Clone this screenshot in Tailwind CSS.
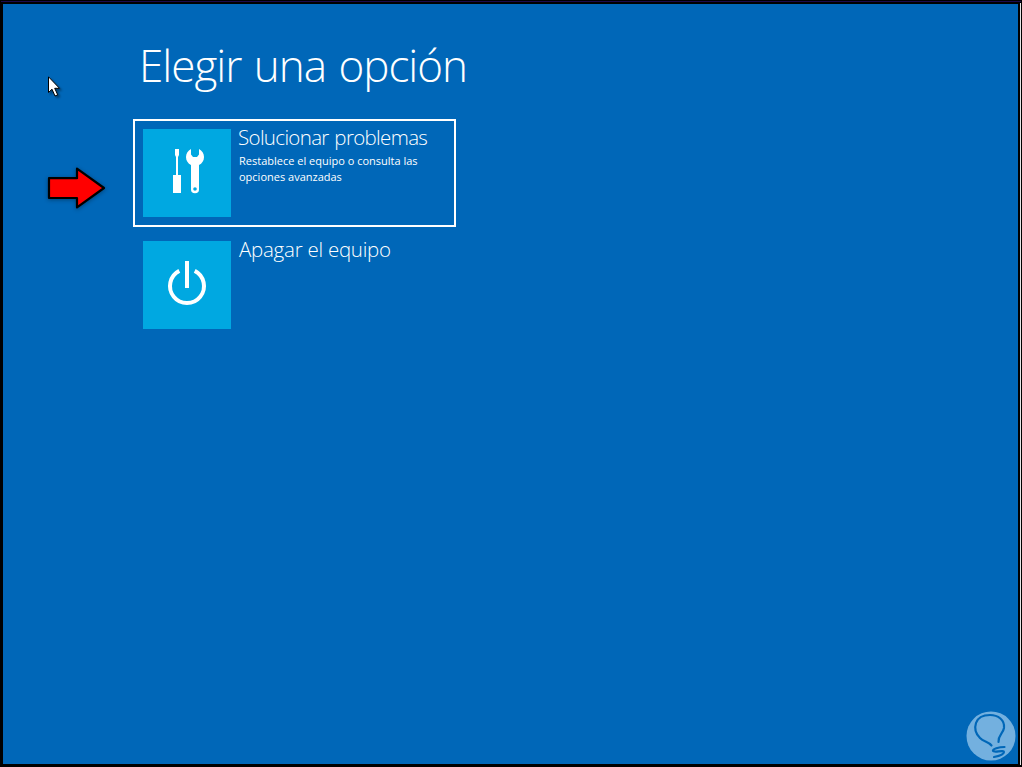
<!DOCTYPE html>
<html lang="es">
<head>
  <meta charset="UTF-8">
  <title>Elegir una opción</title>
  <script src="https://cdn.jsdelivr.net/npm/@tailwindcss/browser@4"></script>
</head>
<body class="relative h-[767px] w-[1022px] overflow-hidden bg-black pl-[3px] pt-[4px] font-['Open_Sans','Noto_Sans',sans-serif] text-white">
  <main class="h-[760px] w-[1015px] bg-[#0067b8] pl-[130px] pt-[31px]">
    <h1 class="h-[84px] whitespace-nowrap pl-[6px] text-[44px] font-light leading-[60px] tracking-[-1px] [word-spacing:2px]">Elegir una opción</h1>

    <button class="flex h-[108px] w-[323px] border-2 border-white p-2 text-left">
      <svg class="size-[88px] shrink-0 bg-[#00a8e1]" viewBox="0 0 88 88" fill="#fff">
        <path d="M32 20h4v6l-1 2v18h3v18h-8V46h3V28l-1-2z"/>
        <path fill-rule="evenodd" d="M48 20v5.500l2 2.500h4l2-2.500V20c3 1.500 5 4.500 5 8 0 3.800-2 6.500-5 8v24.500a4 3.800 0 0 1-8 0V36c-3-1.500-5-4.200-5-8 0-3.500 2-6.500 5-8zM52 58.200a1.800 1.800 0 1 0 0 3.600 1.800 1.800 0 0 0 0-3.600z"/>
      </svg>
      <span class="block pl-[7px]">
        <span class="-mt-[6px] block whitespace-nowrap text-[20.500px] font-light leading-[29px] tracking-[-0.66px] [word-spacing:1px]">Solucionar problemas</span>
        <span class="mt-px block whitespace-nowrap pl-px text-[11px] leading-4">Restablece el equipo o consulta las<br>opciones avanzadas</span>
      </span>
    </button>

    <button class="mt-1 flex h-[108px] w-[323px] p-[10px] text-left">
      <svg class="size-[88px] shrink-0 bg-[#00a8e1]" viewBox="0 0 88 88" fill="none" stroke="#fff" stroke-width="4">
        <path d="M44 20v27M36.300 29.900a17 17 0 1 0 15.400 0"/>
      </svg>
      <span class="-mt-[6px] block whitespace-nowrap pl-2 text-[20.500px] font-light leading-[29px] tracking-[-0.25px]">Apagar el equipo</span>
    </button>
  </main>

  <!-- window edges -->
  <div class="absolute left-px top-px h-px w-[1020px] bg-[#1a0a50]"></div>
  <div class="absolute left-[1020px] top-[3px] h-[762px] w-px bg-[#e8e8e8]"></div>

  <!-- mouse pointer -->
  <svg class="absolute left-[48px] top-[76px] drop-shadow-[2px_2px_1px_rgba(0,0,0,0.4)]" width="14" height="22" viewBox="0 0 14 22">
    <path d="M.5.800v15.700l3.500-3.300 3 6.800 2.700-1.200-3-6.500h4.800z" fill="#fff" stroke="#000"/>
  </svg>

  <!-- red arrow -->
  <svg class="absolute left-[46px] top-[165px] drop-shadow-[0_1px_2px_rgba(0,0,0,0.35)]" width="62" height="46" viewBox="0 0 62 46">
    <path d="M3 13.200h28V3.700L58 23 31 42.300V33H3z" fill="#f00" stroke="#000" stroke-width="2.200" stroke-linejoin="round"/>
  </svg>

  <!-- light bulb watermark -->
  <svg class="absolute left-[966px] top-[711px]" width="51" height="50" viewBox="0 0 51 50">
    <circle cx="25" cy="25" r="24.500" fill="#73b0df"/>
    <path d="M25.500 34.500C22 30 18 31 14 27 10 23 8 18 10 12 12 6 18 4 24 4c8 0 15 5 14 13-1 6-6 7-5.500 14M38.500 36C33 36 26 38 27 40s11-1.500 11 1-5 4-10 5" fill="none" stroke="#0067b8" stroke-width="2.200" stroke-linecap="round"/>
  </svg>
</body>
</html>
